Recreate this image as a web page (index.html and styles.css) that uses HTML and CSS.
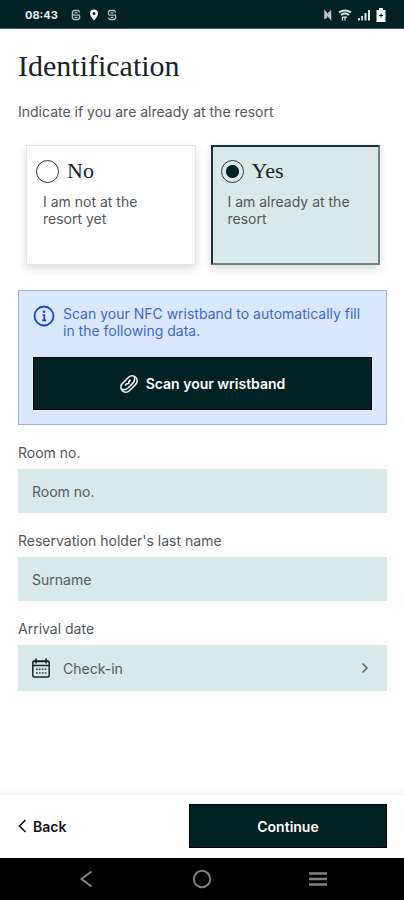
FILE: index.html
```html
<!DOCTYPE html>
<html lang="en">
<head>
<meta charset="utf-8">
<meta name="viewport" content="width=device-width, initial-scale=1">
<title>Identification</title>
<link rel="stylesheet" href="styles.css">
</head>
<body>
<div class="status">
  <span class="time">08:43</span>
  <svg class="app" viewBox="0 0 10 12" width="10" height="12"><path d="M8.600 3.500L7.500 1.500h-5L1.400 3v2l1.200 1.200H9M1.400 5v4l1.400 1.500h4.500L8.600 9V6.500M3.500 8.300h3M3.500 3.800h3" fill="none" stroke="#aebbbc" stroke-width="1.300"/></svg>
  <svg class="pin" viewBox="0 0 10 12" width="10" height="12"><path fill="#fff" fill-rule="evenodd" d="M5 .5a4 4 0 0 0-4 4C1 7 5 11.500 5 11.500S9 7 9 4.500a4 4 0 0 0-4-4zm0 2.500a1.500 1.500 0 1 1 0 3 1.500 1.500 0 0 1 0-3z"/></svg>
  <svg class="app" viewBox="0 0 10 12" width="10" height="12"><path d="M8.600 3.500L7.500 1.500h-5L1.400 3v2l1.200 1.200H9M1.400 8.500l1.400 2h4.500L8.600 9V6.500M3.500 8.300h3M3.500 3.800h3" fill="none" stroke="#aebbbc" stroke-width="1.300"/></svg>
  <div class="signals">
    <svg viewBox="0 0 10 12" width="10" height="12"><path d="M2 10V2.500L7.500 9.500V1.500M3.500 9V4M6 8V3" fill="none" stroke="#bfcaca" stroke-width="1.500"/></svg>
    <svg viewBox="0 0 14 12" width="14" height="12"><path d="M1 3.500c3.500-2.800 8.500-2.800 12 0M3 6c2.500-2 5.500-2 8 0" fill="none" stroke="#d5dcdc" stroke-width="2"/><path d="M5 8.500c1.500-1 2.500-1 4 0M4.500 7.500v4M7 8.500v3" fill="none" stroke="#d5dcdc" stroke-width="1.300"/></svg>
    <svg viewBox="0 0 14 12" width="14" height="12"><path d="M2 9v2.500M5 7v4.500" stroke="#c8d0d0" stroke-width="2"/><path d="M8.500 4v7.500M12 1v10.500" stroke="#e0e5e5" stroke-width="2"/></svg>
    <svg viewBox="0 0 10 14" width="10" height="14"><path fill="#fff" d="M3 0h4v2h2.500v12h-9V2H3z"/><path fill="#002224" d="M4.500 5.500h1v1.500h1.500v1H5.500v1.500h-1V8H3V7h1.500z"/></svg>
  </div>
</div>

<main>
  <h1>Identification</h1>
  <fieldset>
    <legend>Indicate if you are already at the resort</legend>
    <div class="choices">
      <label class="choice">
        <span class="option"><input type="radio" name="resort"><span class="name">No</span></span>
        <span class="detail">I am not at the resort yet</span>
      </label>
      <label class="choice">
        <span class="option"><input type="radio" name="resort" checked><span class="name">Yes</span></span>
        <span class="detail">I am already at the resort</span>
      </label>
    </div>
  </fieldset>

  <section class="notice">
    <div class="message">
      <svg viewBox="0 0 22 22" width="22" height="22"><circle cx="11" cy="11" r="9.500" fill="none" stroke="#1746bd" stroke-width="1.800"/><path d="M9.500 10h1.800v5.500M9.200 15.300h4" fill="none" stroke="#1746bd" stroke-width="1.700"/><circle cx="11" cy="6.800" r="1.300" fill="#1746bd"/></svg>
      <p>Scan your NFC wristband to automatically fill in the following data.</p>
    </div>
    <button type="button" class="primary scan">
      <svg viewBox="0 0 18 18" width="18" height="18"><g transform="rotate(-45 9 9)" fill="none" stroke="#f2f5f5" stroke-width="1.500"><rect x="-.5" y="4" width="19" height="10" rx="5"/><path d="M.3 7.500c1 2.800 3 3.700 6 3.700h5.400c3 0 5-.9 6-3.700"/><path d="M5 7.200h2.500l1.500 1.300 1.500-1.300H13"/></g></svg>
      Scan your wristband
    </button>
  </section>

  <div class="field">
    <label for="room">Room no.</label>
    <input id="room" type="text" placeholder="Room no.">
  </div>
  <div class="field">
    <label for="surname">Reservation holder's last name</label>
    <input id="surname" type="text" placeholder="Surname">
  </div>
  <div class="field">
    <label for="arrival">Arrival date</label>
    <button type="button" id="arrival" class="date">
      <svg viewBox="0 0 20 20" width="20" height="20"><rect x="1.800" y="3" width="16.400" height="16" rx="1.500" fill="none" stroke="#14282a" stroke-width="1.500"/><path d="M2 7.500h16M5 .5v5M15 .5v5" stroke="#14282a" stroke-width="1.600"/><path d="M2 3.500h16" stroke="#14282a" stroke-width="1.500"/><path d="M5 11.300h10.500M5 15h10.500" stroke="#34484a" stroke-width="1.500" stroke-dasharray="1.700 1.200"/></svg>
      <span>Check-in</span>
      <svg viewBox="0 0 8 12" width="8" height="12"><path d="M1.500 1.500L6 6l-4.500 4.500" fill="none" stroke="#58696b" stroke-width="1.600"/></svg>
    </button>
  </div>
</main>

<footer>
  <button type="button" class="back">
    <svg viewBox="0 0 9 14" width="9" height="14"><path d="M7.500 1L1.500 7l6 6" fill="none" stroke="#111" stroke-width="1.600"/></svg>
    Back
  </button>
  <button type="button" class="primary">Continue</button>
</footer>

<nav class="system">
  <button type="button" aria-label="Back"><svg viewBox="0 0 20 20" width="20" height="20"><path d="M15.500 2.500L5.500 10l10 7.500" fill="none" stroke="#808080" stroke-width="2"/></svg></button>
  <button type="button" aria-label="Home"><svg viewBox="0 0 20 20" width="20" height="20"><circle cx="10" cy="10" r="8.200" fill="none" stroke="#808080" stroke-width="2"/></svg></button>
  <button type="button" aria-label="Recent apps"><svg viewBox="0 0 20 20" width="20" height="20"><path d="M1 4.500h18M1 10h18M1 15.500h18" stroke="#808080" stroke-width="2.600"/></svg></button>
</nav>
</body>
</html>
```
FILE: styles.css
```css
* {
  box-sizing: border-box;
}

body {
  margin: 0;
  min-height: 100vh;
  display: flex;
  flex-direction: column;
  background: #fff;
  color: #54575a;
  font: 14px/17px Inter, "Liberation Sans", sans-serif;
}

button,
input {
  font: inherit;
}

.status {
  display: flex;
  align-items: center;
  height: 29px;
  padding: 2px 18px 0 25px;
  background: #002224;
  border-bottom: 1px solid #44595a;
}

.time {
  margin-right: 13px;
  color: #e8eded;
  font-size: 11px;
  font-weight: 700;
}

.status .pin {
  margin: 0 8px;
}

.signals {
  display: flex;
  align-items: center;
  gap: 5px;
  margin-left: auto;
}

main {
  flex: 1;
  padding: 19px 17px 24px 18px;
}

h1 {
  margin: 0 0 19px;
  color: #172527;
  font: 400 30px/36px "Liberation Serif", serif;
}

fieldset {
  margin: 0;
  padding: 0;
  border: 0;
}

legend {
  padding: 0;
}

.choices {
  display: grid;
  grid-template-columns: 1fr 1fr;
  gap: 15px;
  margin: 25px 7px 0 8px;
}

.choice {
  min-height: 120px;
  padding: 13px 16px 12px 9px;
  background: #fefefe;
  border: 1px solid #e4e4e4;
  box-shadow: 0 4px 8px #00000024;
}

.choice:has(:checked) {
  background: #d9e8e8;
  border-width: 2px;
  border-style: solid;
  border-color: #1c3234 #6f8283 #6f8283 #1c3234;
  padding: 12px 15px 11px 8px;
}

.option {
  display: flex;
  align-items: center;
  gap: 8px;
  height: 24px;
}

.option input {
  appearance: none;
  width: 23px;
  height: 23px;
  margin: 0;
  border: 1px solid #2d3739;
  border-radius: 50%;
}

.option input:checked {
  background: radial-gradient(circle, #002224 6px, transparent 7px);
}

.name {
  color: #172527;
  font: 22px/24px "Liberation Serif", serif;
}

.detail {
  display: block;
  margin: 10px 0 0 7px;
}

.notice {
  margin: 25px 0 19px;
  padding: 14px;
  background: #d9e8fe;
  border: 1px solid #9db7e6;
}

.message {
  display: flex;
  gap: 8px;
  margin-bottom: 18px;
  color: #4168cc;
}

.message svg {
  flex: none;
}

.message p {
  margin: 0;
}

.primary {
  display: flex;
  align-items: center;
  justify-content: center;
  gap: 8px;
  height: 44px;
  padding: 0;
  background: #002224;
  border: 1px solid #000;
  color: #fff;
  font-weight: 600;
}

.primary svg {
  overflow: visible;
}

.scan {
  width: 100%;
  height: 53px;
}

.field {
  display: flex;
  flex-direction: column;
  gap: 8px;
  margin-bottom: 19px;
}

.field input,
.date {
  width: 100%;
  height: 44px;
  padding: 0 14px;
  background: #d9e8e8;
  border: 0;
  border-radius: 0;
  color: #506163;
}

.field input::placeholder {
  color: #506163;
  opacity: 1;
}

.date {
  display: flex;
  align-items: center;
  gap: 12px;
  height: 46px;
  padding: 0 18px 0 13px;
  text-align: left;
}

.date span {
  flex: 1;
}

footer {
  display: grid;
  grid-template-columns: 171px 1fr;
  align-items: center;
  padding: 9px 17px 10px 18px;
  border-top: 1px solid #f3f3f3;
  box-shadow: 0 -2px 3px #0000000d;
}

.back {
  display: flex;
  align-items: center;
  justify-self: start;
  gap: 6px;
  height: 44px;
  padding: 0;
  background: none;
  border: 0;
  color: #111;
  font-weight: 600;
}

.system {
  display: flex;
  justify-content: center;
  gap: 96px;
  height: 42px;
  background: #000;
}

.system button {
  display: flex;
  align-items: center;
  padding: 0;
  background: none;
  border: 0;
}
```
